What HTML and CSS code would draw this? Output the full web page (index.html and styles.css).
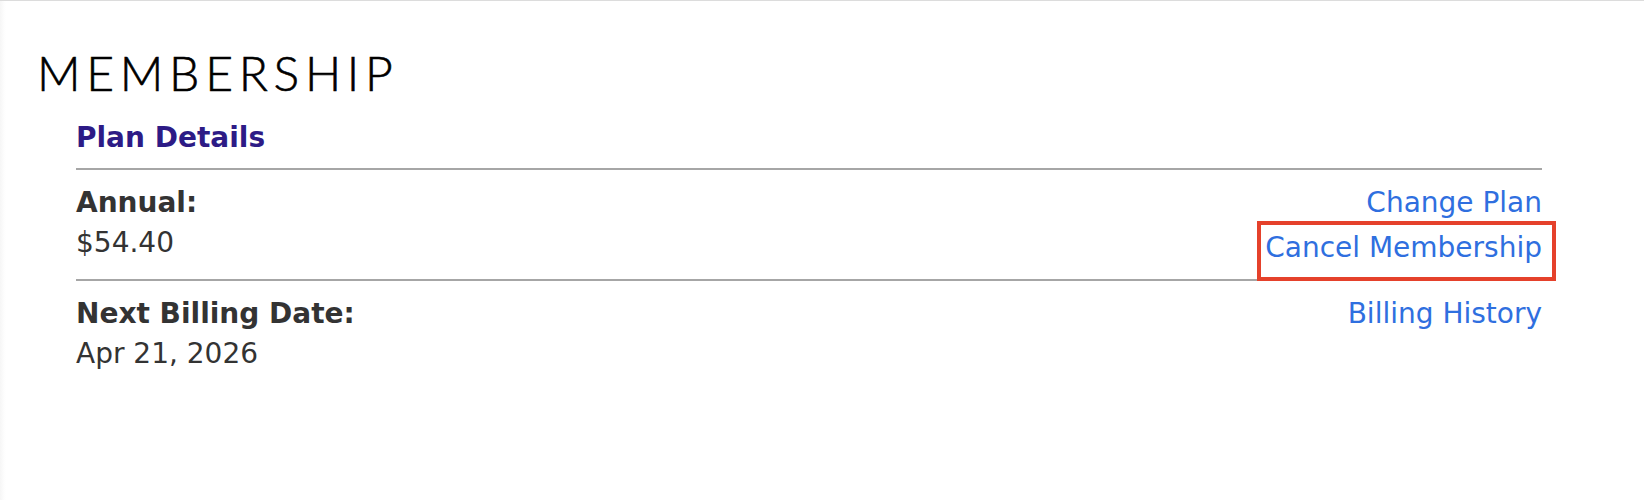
FILE: index.html
```html
<!DOCTYPE html>
<html lang="en">
<head>
<meta charset="utf-8">
<title>Membership</title>
<link rel="stylesheet" href="styles.css">
</head>
<body>
<div class="page">
  <h1 class="title">MEMBERSHIP</h1>
  <section class="plan">
    <h2 class="plan-heading">Plan Details</h2>
    <div class="row row-first">
      <div class="info">
        <div class="label">Annual:</div>
        <div class="value">$54.40</div>
      </div>
      <div class="links">
        <a class="link" href="#">Change Plan</a>
        <a class="link link-marked" href="#">Cancel Membership</a>
      </div>
    </div>
    <div class="row row-second">
      <div class="info">
        <div class="label">Next Billing Date:</div>
        <div class="value">Apr 21, 2026</div>
      </div>
      <div class="links">
        <a class="link" href="#">Billing History</a>
      </div>
    </div>
  </section>
</div>
</body>
</html>
```
FILE: styles.css
```css
html, body {
  margin: 0;
  padding: 0;
  background: #ffffff;
}

body {
  height: 500px;
  border-top: 1px solid #dcdcdc;
  box-sizing: border-box;
  font-family: "DejaVu Sans", Verdana, sans-serif;
  color: #333333;
}

.page {
  height: 100%;
  box-sizing: border-box;
  padding: 42px 102px 0 37px;
  background: linear-gradient(to right, #f6f6f6 0, #fdfdfd 4px, #ffffff 6px);
}

.title {
  margin: 0;
  font-family: "Lato", "Open Sans", sans-serif;
  font-weight: 300;
  -webkit-text-stroke: 0.6px #000000;
  font-size: 48px;
  line-height: 60px;
  letter-spacing: 5.7px;
  color: #000000;
}

.plan {
  margin-left: 39px;
  padding-top: 15px;
}

.plan-heading {
  margin: 0;
  font-size: 28px;
  line-height: 40px;
  font-weight: bold;
  color: #2d1b86;
  padding-bottom: 10px;
  border-bottom: 2px solid #a6a6a6;
}

.row {
  display: flex;
  justify-content: space-between;
  align-items: flex-start;
  font-size: 28px;
  line-height: 40px;
}

.row-first {
  padding: 13px 0 11px;
  border-bottom: 2px solid #a6a6a6;
}

.row-second {
  padding: 13px 0 0;
}

.label {
  font-weight: bold;
}

.links {
  display: flex;
  flex-direction: column;
  align-items: flex-end;
  gap: 5px;
}

.link {
  color: #2f6fdf;
  text-decoration: none;
}

.link-marked {
  position: relative;
}

.link-marked::after {
  content: "";
  position: absolute;
  top: -7px;
  bottom: -13px;
  left: -8px;
  right: -14px;
  border: 4px solid #e5412b;
}
```
